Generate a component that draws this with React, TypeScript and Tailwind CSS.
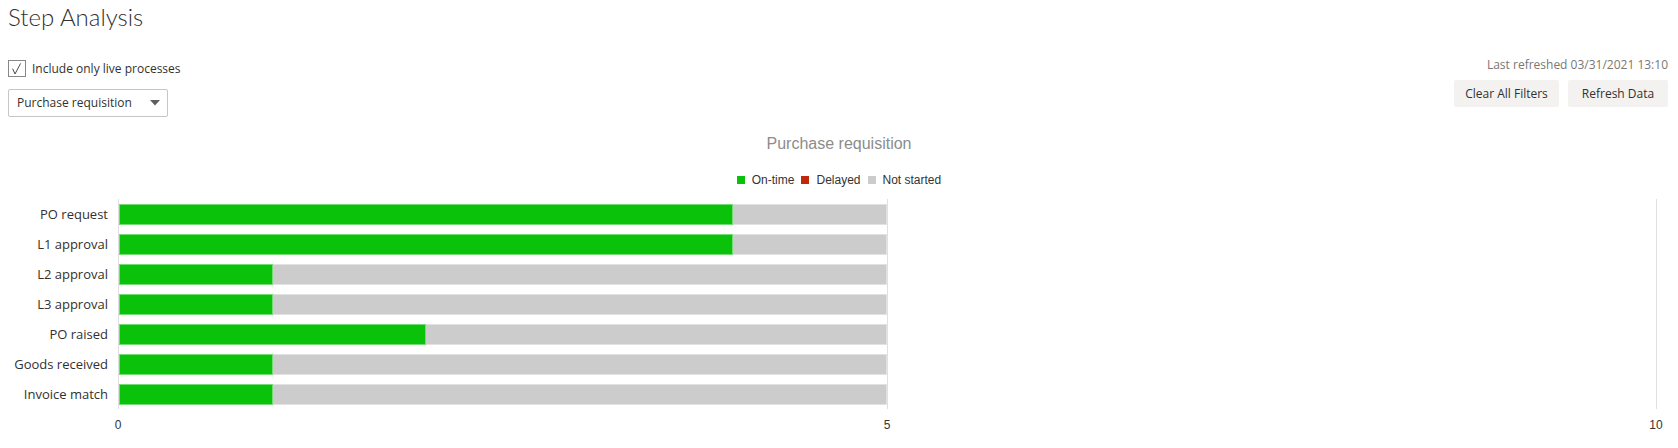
import React from "react";

const steps = [
  { name: "PO request", on: 4, total: 5 },
  { name: "L1 approval", on: 4, total: 5 },
  { name: "L2 approval", on: 1, total: 5 },
  { name: "L3 approval", on: 1, total: 5 },
  { name: "PO raised", on: 2, total: 5 },
  { name: "Goods received", on: 1, total: 5 },
  { name: "Invoice match", on: 1, total: 5 },
];

const MAX = 10;

export default function App() {
  return (
    <div className="w-[1678px] h-[448px] bg-white overflow-hidden text-[#323130] font-['Open_Sans',sans-serif]">
      {/* Title */}
      <div className="pl-[8px] h-[33px] pt-[1px] text-[24px] leading-[32px] font-light font-['Lato',sans-serif] text-[#323130]">
        Step Analysis
      </div>

      {/* Header controls */}
      <div className="mt-[23px] flex justify-between items-start pl-[8px] pr-[10px]">
        <div className="flex flex-col pt-[4px]">
          <div className="flex items-center h-[17px]">
            <div className="w-[18px] h-[17px] border border-[#8a8886] bg-white flex items-center justify-center">
              <svg width="16" height="15" viewBox="0 0 16 15" className="block">
                <path d="M3.6 7.6 L6 13 L11.6 2.4" fill="none" stroke="#4a4a4a" strokeWidth="1" />
              </svg>
            </div>
            <span className="ml-[6px] text-[12px] leading-[17px] text-[#323130]">Include only live processes</span>
          </div>
          <div className="mt-[12px] w-[160px] h-[28px] border border-[#c8c6c4] rounded-[2px] flex items-center justify-between pl-[8px] pr-[6px]">
            <span className="text-[12px] text-[#323130]">Purchase requisition</span>
            <svg width="10" height="6" viewBox="0 0 10 6" className="block mr-[1px]">
              <path d="M0 0 L10 0 L5 5.5 Z" fill="#605e5c" />
            </svg>
          </div>
        </div>
        <div className="flex flex-col items-end">
          <div className="text-[12px] leading-[18px] text-[#797775]">Last refreshed 03/31/2021 13:10</div>
          <div className="mt-[6px] flex gap-[9px]">
            <button className="h-[27px] w-[105px] bg-[#f3f2f1] rounded-[2px] text-[12px] text-[#323130]">
              Clear All Filters
            </button>
            <button className="h-[27px] w-[100px] bg-[#f3f2f1] rounded-[2px] text-[12px] text-[#323130]">
              Refresh Data
            </button>
          </div>
        </div>
      </div>

      {/* Chart header */}
      <div className="mt-[17px] flex flex-col items-center font-['Liberation_Sans',Arial,sans-serif]">
        <div className="text-[16px] leading-[20px] text-[#8c8c8c]">Purchase requisition</div>
        <div className="mt-[19px] h-[14px] flex items-center text-[12px] leading-[14px] text-[#333333]">
          <span className="w-[8px] h-[8px] bg-[#0bc20b]" />
          <span className="ml-[7px]">On-time</span>
          <span className="ml-[7px] w-[8px] h-[8px] bg-[#c0290c]" />
          <span className="ml-[7px]">Delayed</span>
          <span className="ml-[7px] w-[8px] h-[8px] bg-[#cccccc]" />
          <span className="ml-[7px]">Not started</span>
        </div>
      </div>

      {/* Plot */}
      <div className="mt-[12px] flex">
        <div className="w-[118px] shrink-0 pr-[10px] flex flex-col">
          {steps.map((s) => (
            <div key={s.name} className="h-[30px] pt-[1px] flex items-center justify-end text-[13px] text-[#323130] whitespace-nowrap">
              {s.name}
            </div>
          ))}
        </div>
        <div className="relative flex-1 mr-[22px]">
          <div className="absolute top-0 bottom-0 left-0 w-px bg-[#e0e0e0]" />
          <div className="absolute top-0 bottom-0 left-1/2 w-px bg-[#e0e0e0]" />
          <div className="absolute top-0 bottom-0 left-full w-px bg-[#e0e0e0]" />
          {steps.map((s) => (
            <div key={s.name} className="h-[30px] pt-[5px]">
              <div className="relative flex h-[21px] ml-px" style={{ width: `calc(${(s.total / MAX) * 100}% - 1px)` }}>
                <div
                  className="h-full bg-[#0bc20b] border border-[#74dc74]"
                  style={{ width: `${(s.on / s.total) * 100}%` }}
                />
                <div className="h-full flex-1 bg-[#cccccc] border-y border-r border-[#e2e2e2]" />
              </div>
            </div>
          ))}
        </div>
      </div>

      {/* X axis labels */}
      <div className="mt-[9px] ml-[118px] mr-[22px] relative h-[14px] text-[12px] leading-[14px] text-[#333333] font-['Liberation_Sans',Arial,sans-serif]">
        <span className="absolute left-0 -translate-x-1/2">0</span>
        <span className="absolute left-1/2 -translate-x-1/2">5</span>
        <span className="absolute left-full -translate-x-1/2">10</span>
      </div>
    </div>
  );
}
